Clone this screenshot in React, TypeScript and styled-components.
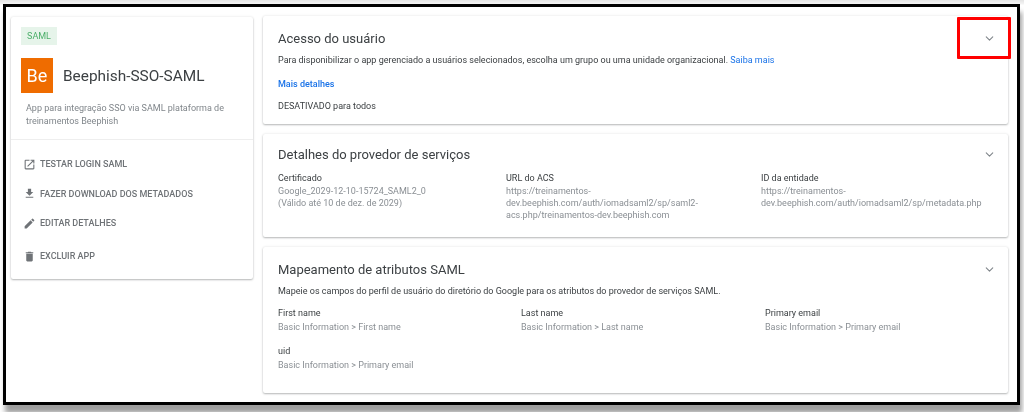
import styled, { createGlobalStyle } from 'styled-components';
import { MdOutlineOpenInNew, MdFileDownload, MdEdit, MdDelete } from 'react-icons/md';
import { ChevronDown } from 'lucide-react';

const Global = createGlobalStyle`
  html, body {
    margin: 0;
    padding: 0;
    height: 412px;
    overflow: hidden;
    background: #fff;
    font-family: Roboto, "Liberation Sans", sans-serif;
  }
`;
const Page = styled.div`
  width: 1024px;
  height: 412px;
  padding: 4px 4px 7px 3px;
  box-sizing: border-box;
  background: linear-gradient(180deg, #e4e4e4 0, #f4f4f4 4px, #ffffff 5px);
`;
const Frame = styled.div`
  position: relative;
  height: 100%;
  box-sizing: border-box;
  border: 3px solid #000;
  background: #fff;
  box-shadow: 2px 8px 5px rgba(0, 0, 0, 0.38);
  padding: 9px 9px 0 5px;
  display: flex;
  gap: 10px;
  align-items: flex-start;
`;
const SideCard = styled.aside`
  width: 242px;
  flex: none;
  margin-top: 1px;
  height: 262px;
  box-sizing: border-box;
  background: #fff;
  border-radius: 2px;
  box-shadow: 0 1px 2px rgba(60, 64, 67, 0.35), 0 0 3px rgba(60, 64, 67, 0.1);
  filter: blur(0.35px);
`;
const SideTop = styled.div`
  padding: 10px 10px 0;
  height: 123px;
  box-sizing: border-box;
  border-bottom: 1px solid #eeeeee;
`;
const Badge = styled.div`
  width: 36px;
  height: 18px;
  background: #e6f4ea;
  color: #4caf6a;
  font-size: 9px;
  line-height: 18px;
  text-align: center;
`;
const AppRow = styled.div`
  display: flex;
  align-items: center;
  gap: 10px;
  margin-top: 13px;
`;
const Logo = styled.div`
  width: 32px;
  height: 35px;
  background: #ef6c00;
  color: #fff;
  font-size: 18px;
  display: flex;
  align-items: center;
  justify-content: center;
`;
const AppName = styled.div`
  font-size: 15.4px;
  color: #3c4043;
`;
const AppDesc = styled.p`
  margin: 9px 0 0 5px;
  font-size: 9px;
  line-height: 13px;
  color: #80868b;
`;
const Actions = styled.div`
  padding-top: 9px;
`;
const Action = styled.div<{ $h: number }>`
  display: flex;
  align-items: center;
  gap: 4px;
  height: ${({ $h }) => $h}px;
  padding-left: 12px;
  font-size: 9px;
  font-weight: 500;
  color: #6f7377;
  text-transform: uppercase;
  svg {
    width: 13px;
    height: 13px;
    flex: none;
  }
`;
const Column = styled.main`
  flex: 1;
  display: flex;
  flex-direction: column;
  gap: 10px;
  filter: blur(0.35px);
`;
const Card = styled.section<{ $h: number; $top?: number }>`
  height: ${({ $h }) => $h}px;
  box-sizing: border-box;
  padding: ${({ $top }) => $top ?? 12}px 15px 0;
  background: #fff;
  border-radius: 2px;
  box-shadow: 0 1px 2px rgba(60, 64, 67, 0.35), 0 0 3px rgba(60, 64, 67, 0.1);
`;
const CardHead = styled.div`
  display: flex;
  justify-content: space-between;
  align-items: center;
  height: 20px;
  svg {
    width: 13px;
    height: 13px;
    color: #80868b;
    margin-right: -3px;
  }
`;
const CardTitle = styled.h2`
  margin: 0;
  font-size: 13px;
  font-weight: 400;
  color: #3c4043;
`;
const Body = styled.p`
  margin: 0;
  font-size: 9px;
  line-height: 12px;
  color: #3c4043;
`;
const Intro = styled(Body)`
  margin-top: 6px;
`;
const Link = styled.a`
  color: #1a73e8;
`;
const More = styled.div`
  margin-top: 12px;
  font-size: 9px;
  line-height: 12px;
  font-weight: 500;
  color: #1a73e8;
`;
const Status = styled(Body)`
  margin-top: 10px;
`;
const Fields = styled.div<{ $cols: string; $top: number }>`
  display: grid;
  grid-template-columns: ${({ $cols }) => $cols};
  row-gap: 12px;
  margin-top: ${({ $top }) => $top}px;
`;
const Label = styled.div`
  font-size: 9px;
  line-height: 12px;
  color: #3c4043;
`;
const Value = styled.div<{ $gap?: number }>`
  margin-top: ${({ $gap }) => $gap ?? 1}px;
  font-size: 9px;
  line-height: 12px;
  color: #8a8f94;
`;
const Highlight = styled.div`
  position: absolute;
  top: 10px;
  right: 6px;
  width: 54px;
  height: 42px;
  box-sizing: border-box;
  border: 3px solid #ff0000;
  border-radius: 1px;
`;

const actions = [
  { label: 'Testar login SAML', icon: <MdOutlineOpenInNew />, h: 30 },
  { label: 'Fazer download dos metadados', icon: <MdFileDownload />, h: 29 },
  { label: 'Editar detalhes', icon: <MdEdit />, h: 30 },
  { label: 'Excluir app', icon: <MdDelete />, h: 36 },
];

const mappings = [
  { name: 'First name', value: 'Basic Information > First name' },
  { name: 'Last name', value: 'Basic Information > Last name' },
  { name: 'Primary email', value: 'Basic Information > Primary email' },
  { name: 'uid', value: 'Basic Information > Primary email' },
];

export default function App() {
  return (
    <Page>
      <Global />
      <Frame>
        <SideCard>
          <SideTop>
            <Badge>SAML</Badge>
            <AppRow>
              <Logo>Be</Logo>
              <AppName>Beephish-SSO-SAML</AppName>
            </AppRow>
            <AppDesc>
              App para integração SSO via SAML plataforma de
              <br />
              treinamentos Beephish
            </AppDesc>
          </SideTop>
          <Actions>
            {actions.map((a) => (
              <Action key={a.label} $h={a.h}>
                {a.icon}
                {a.label}
              </Action>
            ))}
          </Actions>
        </SideCard>
        <Column>
          <Card $h={108}>
            <CardHead>
              <CardTitle>Acesso do usuário</CardTitle>
              <ChevronDown />
            </CardHead>
            <Intro>
              Para disponibilizar o app gerenciado a usuários selecionados, escolha um grupo ou uma
              unidade organizacional. <Link>Saiba mais</Link>
            </Intro>
            <More>Mais detalhes</More>
            <Status>DESATIVADO para todos</Status>
          </Card>
          <Card $h={103} $top={10}>
            <CardHead>
              <CardTitle>Detalhes do provedor de serviços</CardTitle>
              <ChevronDown />
            </CardHead>
            <Fields $cols="228px 255px 1fr" $top={8}>
              <div>
                <Label>Certificado</Label>
                <Value>
                  Google_2029-12-10-15724_SAML2_0
                  <br />
                  (Válido até 10 de dez. de 2029)
                </Value>
              </div>
              <div>
                <Label>URL do ACS</Label>
                <Value>
                  https://treinamentos-
                  <br />
                  dev.beephish.com/auth/iomadsaml2/sp/saml2-
                  <br />
                  acs.php/treinamentos-dev.beephish.com
                </Value>
              </div>
              <div>
                <Label>ID da entidade</Label>
                <Value>
                  https://treinamentos-
                  <br />
                  dev.beephish.com/auth/iomadsaml2/sp/metadata.php
                </Value>
              </div>
            </Fields>
          </Card>
          <Card $h={146}>
            <CardHead>
              <CardTitle>Mapeamento de atributos SAML</CardTitle>
              <ChevronDown />
            </CardHead>
            <Intro>
              Mapeie os campos do perfil de usuário do diretório do Google para os atributos do
              provedor de serviços SAML.
            </Intro>
            <Fields $cols="243px 244px 1fr" $top={10}>
              {mappings.map((m) => (
                <div key={m.name}>
                  <Label>{m.name}</Label>
                  <Value $gap={2}>{m.value}</Value>
                </div>
              ))}
            </Fields>
          </Card>
        </Column>
        <Highlight />
      </Frame>
    </Page>
  );
}
